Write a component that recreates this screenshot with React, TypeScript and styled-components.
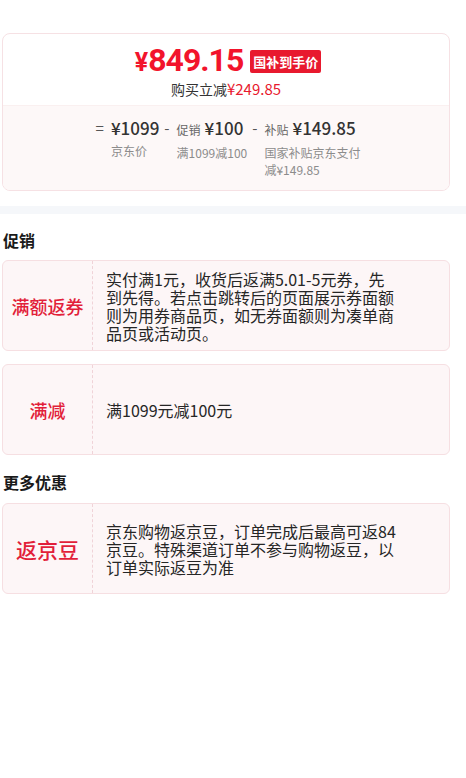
import React from "react";
import styled, { createGlobalStyle } from "styled-components";

const Global = createGlobalStyle`
  html, body { margin: 0; padding: 0; background: #ffffff; }
  body { font-family: "Noto Sans CJK SC", "Noto Sans", sans-serif; color: #333; }
`;

const Page = styled.div`
  width: 466px;
  padding-top: 33px;
  padding-bottom: 40px;
`;

const Inset = styled.div`
  margin: 0 16px 0 2px;
`;

const PriceCard = styled.div`
  border: 1px solid #f6e1e4;
  border-radius: 8px;
  overflow: hidden;
  background: #fff;
`;

const PriceTop = styled.div`
  display: flex;
  flex-direction: column;
  align-items: center;
  padding: 9px 0 6px;
`;

const PriceRow = styled.div`
  display: flex;
  align-items: center;
  height: 36px;
  margin-left: 4px;
`;

const BigPrice = styled.span`
  font-family: "Roboto", "Liberation Sans", sans-serif;
  font-weight: 700;
  font-size: 32px;
  color: #f2142c;
  letter-spacing: -1px;
  line-height: 36px;
`;

const Yen = styled.span`
  font-size: 25px;
  margin-right: 1px;
`;

const Badge = styled.span`
  margin-left: 7px;
  background: #e8192e;
  color: #fff;
  font-size: 13px;
  font-weight: 700;
  line-height: 23px;
  padding: 0 3px;
  border-radius: 2px;
`;

const Saving = styled.div`
  font-size: 14px;
  line-height: 20px;
  color: #333;
`;

const Red = styled.span`
  color: #e8192e;
  font-size: 15px;
`;

const PriceBottom = styled.div`
  background: #fdf8f8;
  border-top: 1px solid #faf0f0;
  display: flex;
  justify-content: center;
  align-items: flex-start;
  padding: 10px 0 12px 6px;
  gap: 5px;
`;

const Op = styled.span`
  font-size: 15px;
  line-height: 24px;
  color: #555;
  margin-right: 2px;
`;

const Part = styled.div<{ $max?: number }>`
  display: flex;
  flex-direction: column;
  max-width: ${(p) => (p.$max ? `${p.$max}px` : "none")};
`;

const MainLine = styled.div`
  display: flex;
  align-items: baseline;
  gap: 4px;
  line-height: 24px;
  white-space: nowrap;
`;

const SmallLabel = styled.span`
  font-size: 12px;
  color: #666;
`;

const Amount = styled.span`
  font-size: 17px;
  font-weight: 500;
  color: #333;
`;

const SubText = styled.div`
  font-size: 12px;
  line-height: 17px;
  color: #8c8c8c;
  margin-top: 2px;
`;

const Band = styled.div`
  height: 8px;
  background: #f5f7fa;
  margin-top: 15px;
`;

const Heading = styled.div<{ $top: number; $bottom: number }>`
  font-size: 16px;
  font-weight: 700;
  color: #1a1a1a;
  line-height: 22px;
  padding: ${(p) => `${p.$top}px 0 ${p.$bottom}px 1px`};
`;

const List = styled.div`
  display: flex;
  flex-direction: column;
  gap: 13px;
`;

const PromoCard = styled.div`
  display: flex;
  min-height: 89px;
  border: 1px solid #f6dfe2;
  border-radius: 6px;
  background: #fdf6f7;
`;

const PromoLabel = styled.div<{ $size: number }>`
  width: 89px;
  flex-shrink: 0;
  border-right: 1px dashed #f0d3d8;
  display: flex;
  align-items: center;
  justify-content: center;
  color: #e21f3a;
  font-weight: 500;
  font-size: ${(p) => p.$size}px;
`;

const PromoBody = styled.div`
  flex: 1;
  display: flex;
  align-items: center;
  padding: 8px 0 8px 13px;
`;

const PromoText = styled.div`
  max-width: 294px;
  font-size: 16px;
  line-height: 18px;
  color: #262626;
`;

type Promo = { label: string; size: number; text: string };

const promos: Promo[] = [
  {
    label: "满额返券",
    size: 18,
    text:
      "实付满1元，收货后返满5.01-5元券，先到先得。若点击跳转后的页面展示券面额则为用券商品页，如无券面额则为凑单商品页或活动页。",
  },
  { label: "满减", size: 18, text: "满1099元减100元" },
];

const more: Promo[] = [
  {
    label: "返京豆",
    size: 21,
    text: "京东购物返京豆，订单完成后最高可返84京豆。特殊渠道订单不参与购物返豆，以订单实际返豆为准",
  },
];

const PromoItem = ({ p }: { p: Promo }) => (
  <PromoCard>
    <PromoLabel $size={p.size}>{p.label}</PromoLabel>
    <PromoBody>
      <PromoText>{p.text}</PromoText>
    </PromoBody>
  </PromoCard>
);

export default function App() {
  return (
    <Page>
      <Global />
      <Inset>
        <PriceCard>
          <PriceTop>
            <PriceRow>
              <BigPrice>
                <Yen>¥</Yen>849.15
              </BigPrice>
              <Badge>国补到手价</Badge>
            </PriceRow>
            <Saving>
              购买立减<Red>¥249.85</Red>
            </Saving>
          </PriceTop>
          <PriceBottom>
            <Op>=</Op>
            <Part>
              <MainLine>
                <Amount>¥1099</Amount>
              </MainLine>
              <SubText>京东价</SubText>
            </Part>
            <Op>-</Op>
            <Part>
              <MainLine>
                <SmallLabel>促销</SmallLabel>
                <Amount>¥100</Amount>
              </MainLine>
              <SubText>满1099减100</SubText>
            </Part>
            <Op>-</Op>
            <Part $max={98}>
              <MainLine>
                <SmallLabel>补贴</SmallLabel>
                <Amount>¥149.85</Amount>
              </MainLine>
              <SubText>国家补贴京东支付减¥149.85</SubText>
            </Part>
          </PriceBottom>
        </PriceCard>
      </Inset>
      <Band />
      <Inset>
        <Heading $top={15} $bottom={9}>促销</Heading>
        <List>
          {promos.map((p) => (
            <PromoItem key={p.label} p={p} />
          ))}
        </List>
        <Heading $top={16} $bottom={10}>更多优惠</Heading>
        <List>
          {more.map((p) => (
            <PromoItem key={p.label} p={p} />
          ))}
        </List>
      </Inset>
    </Page>
  );
}
